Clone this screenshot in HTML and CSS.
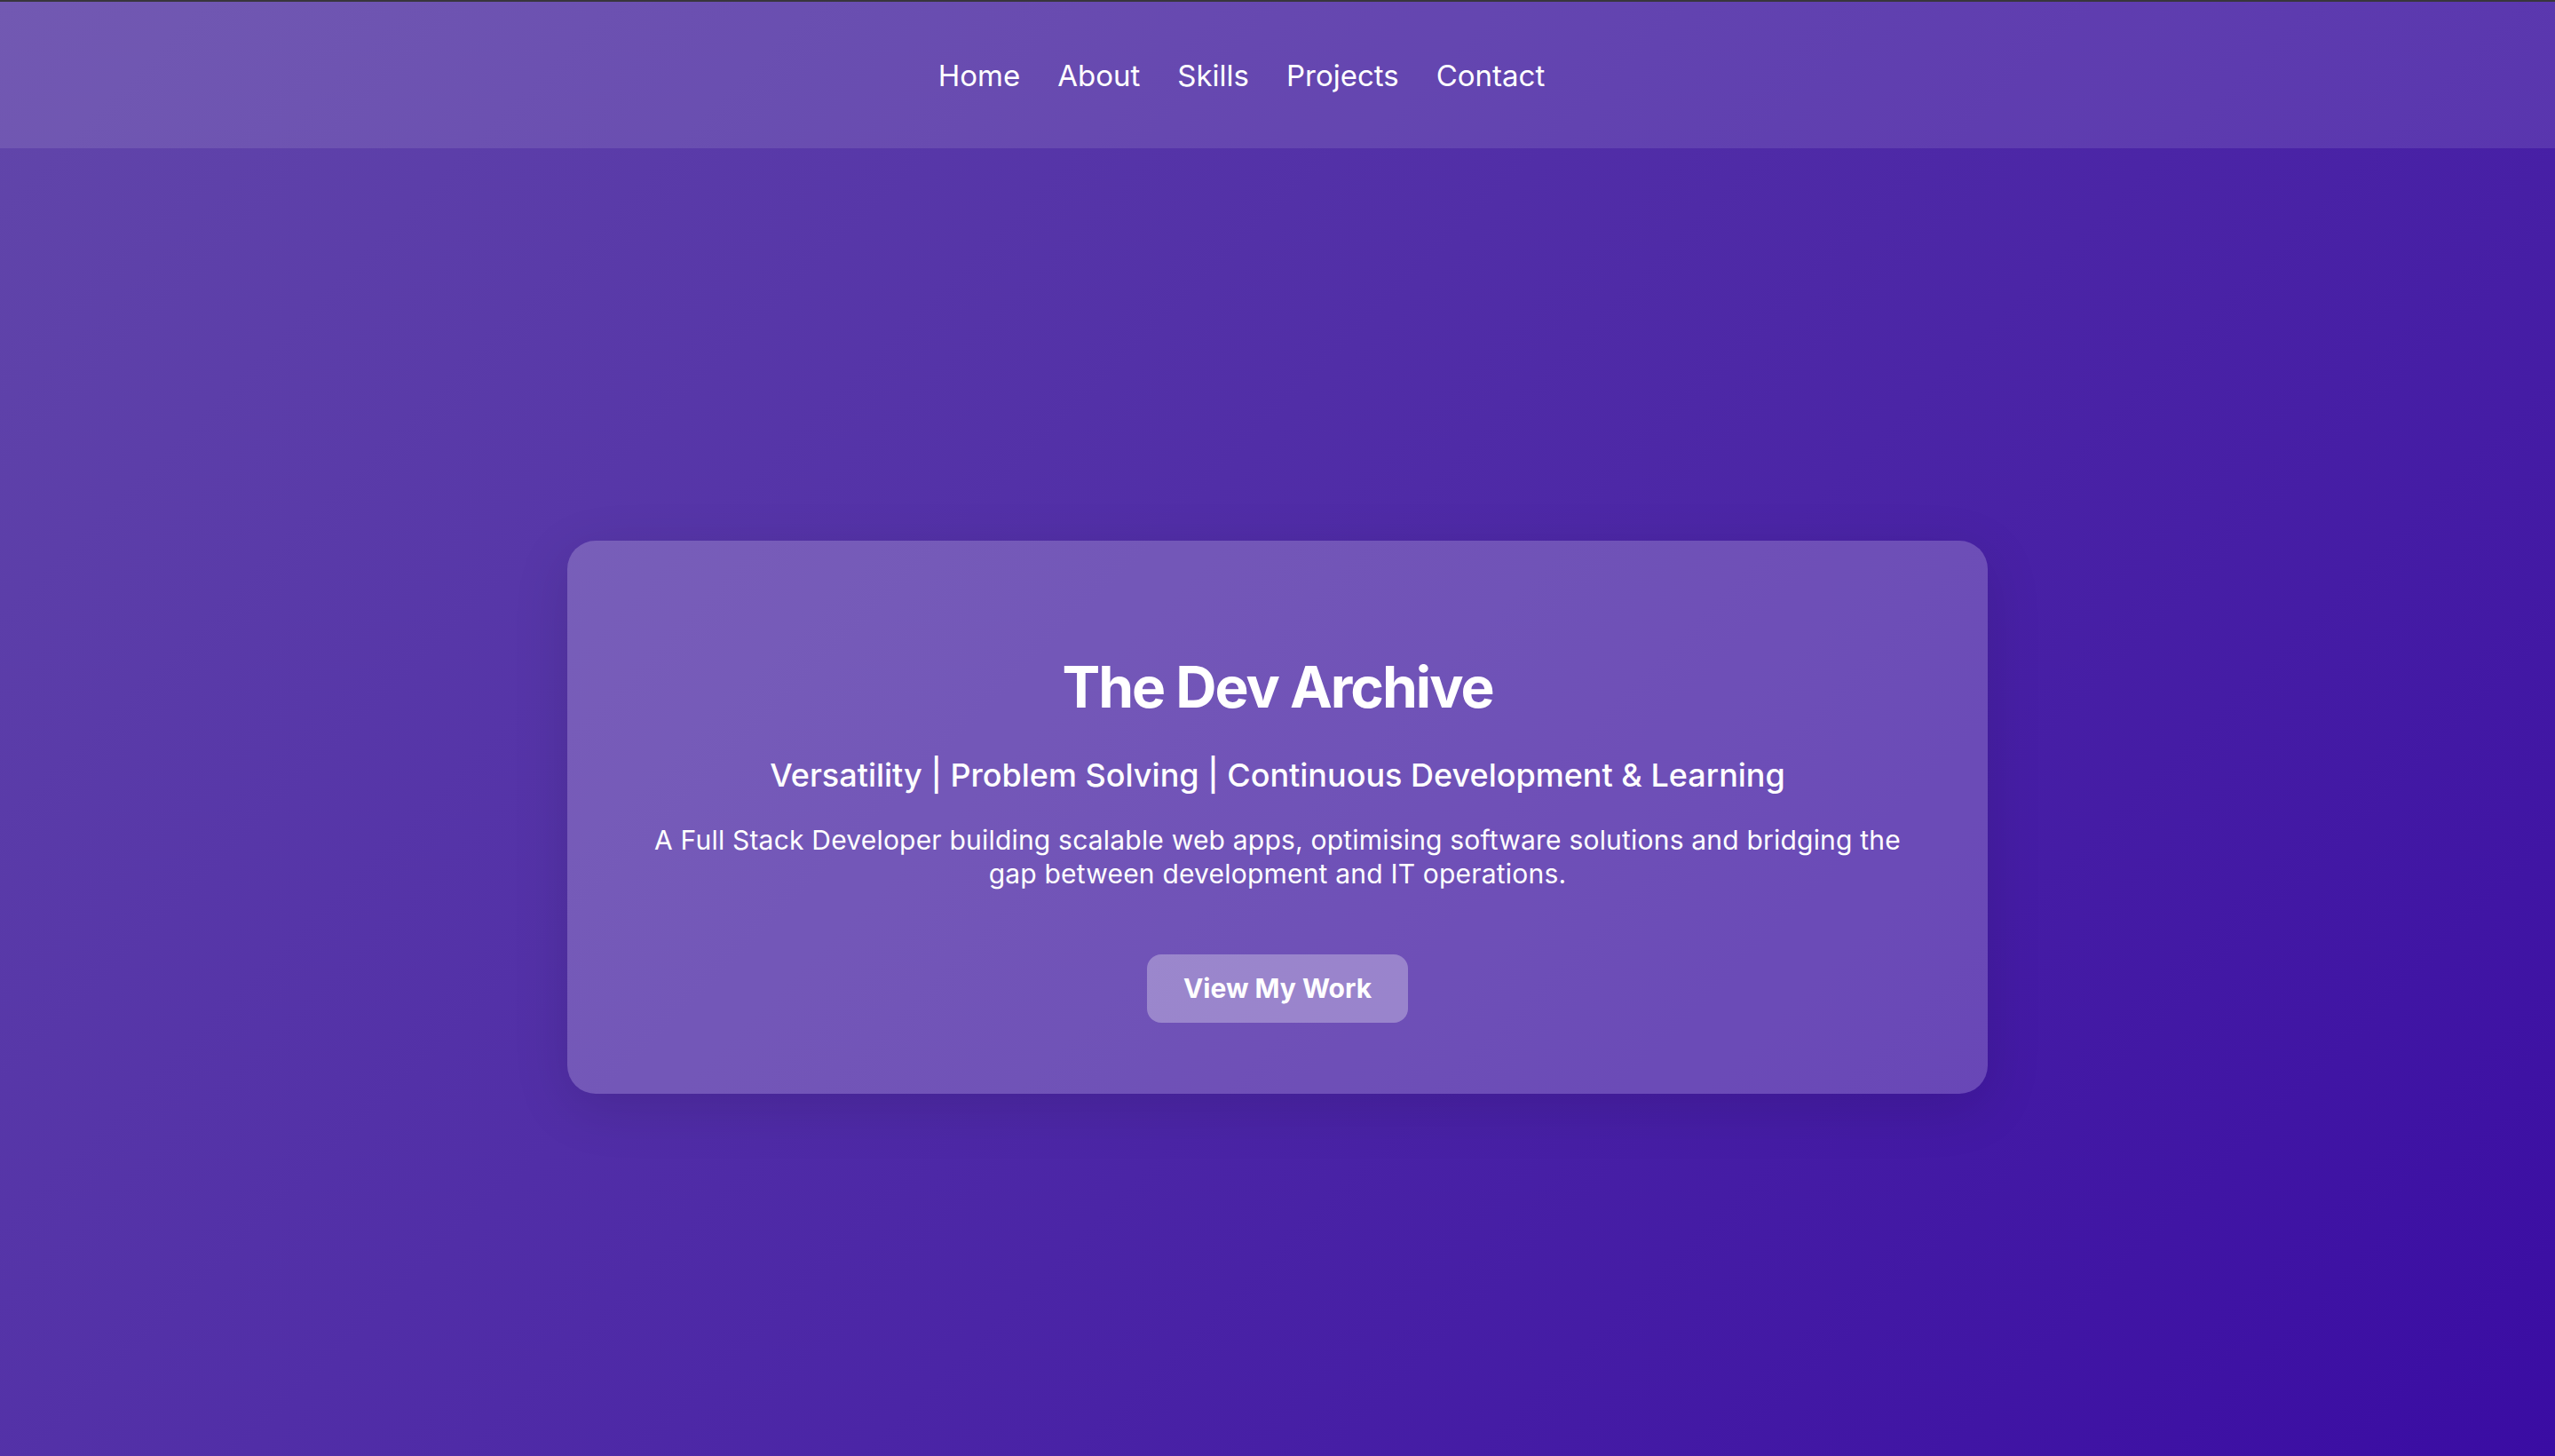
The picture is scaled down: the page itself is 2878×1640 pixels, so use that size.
FILE: index.html
```html
<!DOCTYPE html>
<html lang="en">
<head>
<meta charset="utf-8">
<title>The Dev Archive</title>
<link rel="stylesheet" href="styles.css">
</head>
<body>
<nav class="topnav">
  <ul class="nav-list">
    <li><a href="#home">Home</a></li>
    <li><a href="#about">About</a></li>
    <li><a href="#skills">Skills</a></li>
    <li><a href="#projects">Projects</a></li>
    <li><a href="#contact">Contact</a></li>
  </ul>
</nav>
<main class="hero">
  <section class="card">
    <h1 class="title">The Dev Archive</h1>
    <h2 class="subtitle">Versatility | Problem Solving | Continuous Development &amp; Learning</h2>
    <p class="intro">A Full Stack Developer building scalable web apps, optimising software solutions and bridging the gap between development and IT operations.</p>
    <a class="btn" href="#projects">View My Work</a>
  </section>
</main>
</body>
</html>
```
FILE: styles.css
```css
* { box-sizing: border-box; }
html, body { margin: 0; padding: 0; }
body {
  min-height: 1640px;
  font-family: Inter, "Noto Sans", "Liberation Sans", sans-serif;
  color: #fff;
  background: linear-gradient(135deg, #6247aa 0%, #3a0ca3 100%);
  border-top: 2px solid #38363c;
  display: flex;
  flex-direction: column;
}
.topnav {
  height: 165px;
  background: rgba(255, 255, 255, 0.1);
  display: flex;
  align-items: center;
  justify-content: center;
  padding-right: 81px;
}
.nav-list {
  list-style: none;
  margin: 0;
  padding: 0;
  display: flex;
  gap: 42px;
}
.nav-list a {
  color: #fff;
  text-decoration: none;
  font-size: 33px;
  line-height: 40px;
}
.hero {
  flex: 1;
  display: flex;
  align-items: center;
  justify-content: center;
  padding-top: 34px;
}
.card {
  width: 1600px;
  padding: 80px;
  border-radius: 32px;
  background: rgba(255, 255, 255, 0.2);
  box-shadow: 0 16px 64px rgba(0, 0, 0, 0.12);
  text-align: center;
  display: flex;
  flex-direction: column;
  align-items: center;
}
.title {
  margin: 46px 0 0;
  font-size: 64px;
  line-height: 78px;
  font-weight: 700;
  letter-spacing: -2px;
}
.subtitle {
  margin: 38px 0 0;
  font-size: 36px;
  line-height: 44px;
  font-weight: 500;
}
.intro {
  margin: 32px 0 0;
  font-size: 30px;
  line-height: 38px;
  letter-spacing: 0.2px;
}
.btn {
  margin-top: 72px;
  padding: 20px 41px;
  border-radius: 16px;
  background: rgba(255, 255, 255, 0.3);
  color: #fff;
  text-decoration: none;
  font-size: 30px;
  line-height: 37px;
  font-weight: 700;
}
```
